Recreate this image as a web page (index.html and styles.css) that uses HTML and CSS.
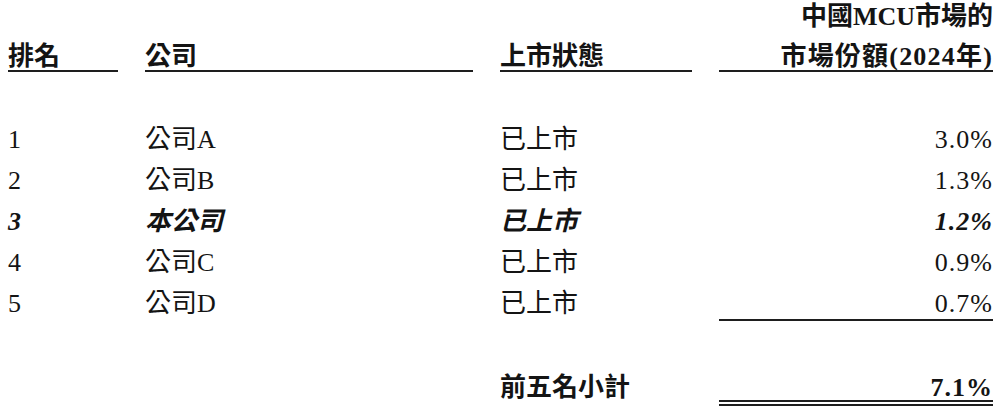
FILE: index.html
```html
<!DOCTYPE html>
<html lang="zh-Hant">
<head>
<meta charset="utf-8">
<title>中國MCU市場的市場份額</title>
<link rel="stylesheet" href="styles.css">
</head>
<body>
<div class="page">
  <div class="grid head">
    <div class="hcell">排名</div>
    <div class="hcell">公司</div>
    <div class="hcell">上市狀態</div>
    <div class="hcell right">
      <div class="hline1">中國MCU市場的</div>
      <div class="hline2">市場份額(2024年)</div>
    </div>
  </div>

  <div class="grid body">
    <div>1</div><div>公司A</div><div>已上市</div><div class="right num">3.0%</div>
    <div>2</div><div>公司B</div><div>已上市</div><div class="right num">1.3%</div>
    <div class="emph">3</div><div class="emph">本公司</div><div class="emph">已上市</div><div class="right num emph">1.2%</div>
    <div>4</div><div>公司C</div><div>已上市</div><div class="right num">0.9%</div>
    <div>5</div><div>公司D</div><div>已上市</div><div class="right num rule">0.7%</div>
  </div>

  <div class="grid total">
    <div></div><div></div>
    <div class="strong">前五名小計</div>
    <div class="right num strong double">7.1%</div>
  </div>
</div>
</body>
</html>
```

FILE: styles.css
```css
html, body {
  margin: 0;
  padding: 0;
  background: #ffffff;
}

body {
  font-family: "Liberation Serif", "Noto Sans CJK TC", serif;
  font-size: 26px;
  color: #141414;
}

.page {
  padding: 4px 7px 0 8px;
  width: 985px;
}

.grid {
  display: grid;
  grid-template-columns: 110px 328px 192px 274px;
  column-gap: 27px;
}

.head {
  align-items: end;
  line-height: 26px;
  font-weight: bold;
}

.hcell {
  border-bottom: 2px solid #1e1e1e;
  white-space: nowrap;
}

.hline1 {
  margin-bottom: 14px;
}

.hline2 {
  letter-spacing: 1.2px;
}

.right {
  text-align: right;
}

.body {
  margin-top: 53px;
  line-height: 30px;
  row-gap: 11px;
}

.num {
  letter-spacing: 1px;
}

.emph {
  font-weight: bold;
  font-style: italic;
}

.rule {
  border-bottom: 2px solid #1e1e1e;
}

.total {
  margin-top: 55px;
  line-height: 24px;
}

.strong {
  font-weight: bold;
}

.double {
  border-bottom: 6px double #1e1e1e;
}
```
